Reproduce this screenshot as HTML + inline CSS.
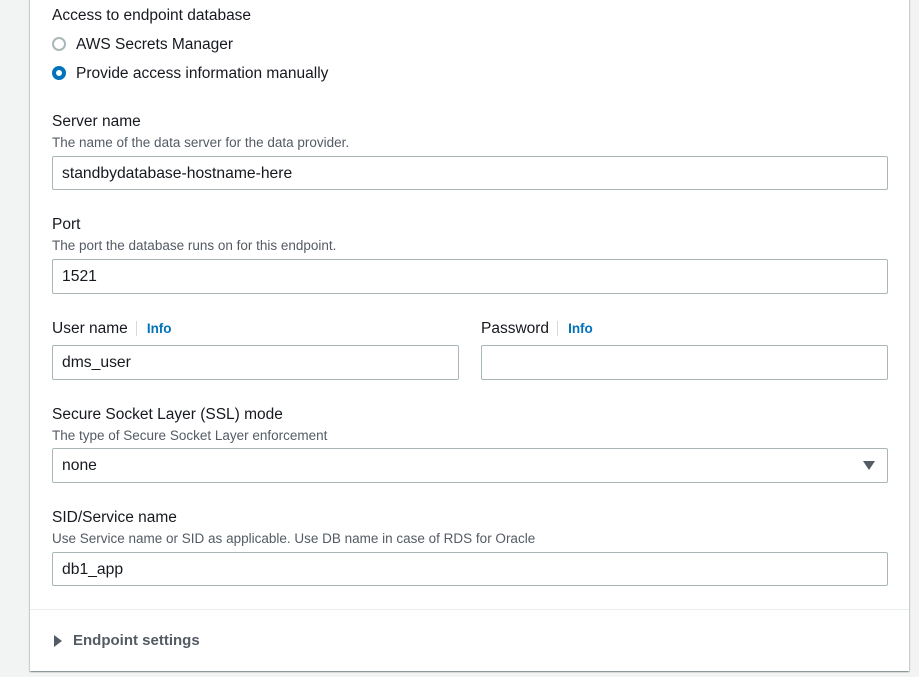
<!DOCTYPE html>
<html><head><style>
body{margin:0;width:919px;height:677px;background:#f2f3f3;font-family:"Liberation Sans",sans-serif;position:relative;overflow:hidden}
.panel{position:absolute;left:30px;top:-2px;width:879px;height:673px;background:#fff;box-shadow:0 1px 1px rgba(0,28,36,.3),1px 1px 1px rgba(0,28,36,.15),-1px 1px 1px rgba(0,28,36,.15)}
.t{position:absolute;font-size:15.5px;color:#16191f;white-space:nowrap}
.d{position:absolute;font-size:13.5px;color:#545b64;white-space:nowrap}
.in{position:absolute;border:1px solid #aab7b8;border-radius:2px;height:32px;box-sizing:border-box;font-size:15.7px;color:#16191f;padding:0 0 0 9px;line-height:33px;background:#fff}
.info{color:#0073bb;font-weight:bold;font-size:13.5px;border-left:1px solid #d5dbdb;padding-left:10px;margin-left:8px}
.r{position:absolute;width:14px;height:14px;border-radius:50%;box-sizing:border-box}
</style></head><body>
<div class="panel"></div>
<div class="t" style="left:52px;top:7px">Access to endpoint database</div>
<div class="r" style="left:52px;top:37px;border:2px solid #aab7b8"></div>
<div class="t" style="left:76px;top:36px">AWS Secrets Manager</div>
<div class="r" style="left:52px;top:66px;border:4px solid #0073bb"></div>
<div class="t" style="left:76px;top:65px">Provide access information manually</div>

<div class="t" style="left:52px;top:113px">Server name</div>
<div class="d" style="left:52px;top:135px">The name of the data server for the data provider.</div>
<div class="in" style="left:52px;top:156px;width:836px;height:34px">standbydatabase-hostname-here</div>

<div class="t" style="left:52px;top:216px">Port</div>
<div class="d" style="left:52px;top:238px">The port the database runs on for this endpoint.</div>
<div class="in" style="left:52px;top:259px;width:836px;height:35px">1521</div>

<div class="t" style="left:52px;top:320px">User name<span class="info">Info</span></div>
<div class="in" style="left:52px;top:345px;width:407px;height:35px">dms_user</div>
<div class="t" style="left:481px;top:320px">Password<span class="info">Info</span></div>
<div class="in" style="left:481px;top:345px;width:407px;height:35px"></div>

<div class="t" style="left:52px;top:406px">Secure Socket Layer (SSL) mode</div>
<div class="d" style="left:52px;top:428px">The type of Secure Socket Layer enforcement</div>
<div class="in" style="left:52px;top:448px;width:836px;height:35px">none
<svg style="position:absolute;right:12px;top:12px" width="12" height="9"><path d="M0 0H12L6 9Z" fill="#545b64"/></svg></div>

<div class="t" style="left:52px;top:509px">SID/Service name</div>
<div class="d" style="left:52px;top:531px">Use Service name or SID as applicable. Use DB name in case of RDS for Oracle</div>
<div class="in" style="left:52px;top:552px;width:836px;height:34px">db1_app</div>

<div style="position:absolute;left:30px;top:609px;width:879px;height:1px;background:#eaeded"></div>
<svg style="position:absolute;left:54px;top:635px" width="9" height="12"><path d="M0 0L8 6L0 12Z" fill="#545b64"/></svg>
<div class="t" style="left:73px;top:632px;font-weight:bold;color:#545b64;font-size:15px">Endpoint settings</div>
</body></html>
